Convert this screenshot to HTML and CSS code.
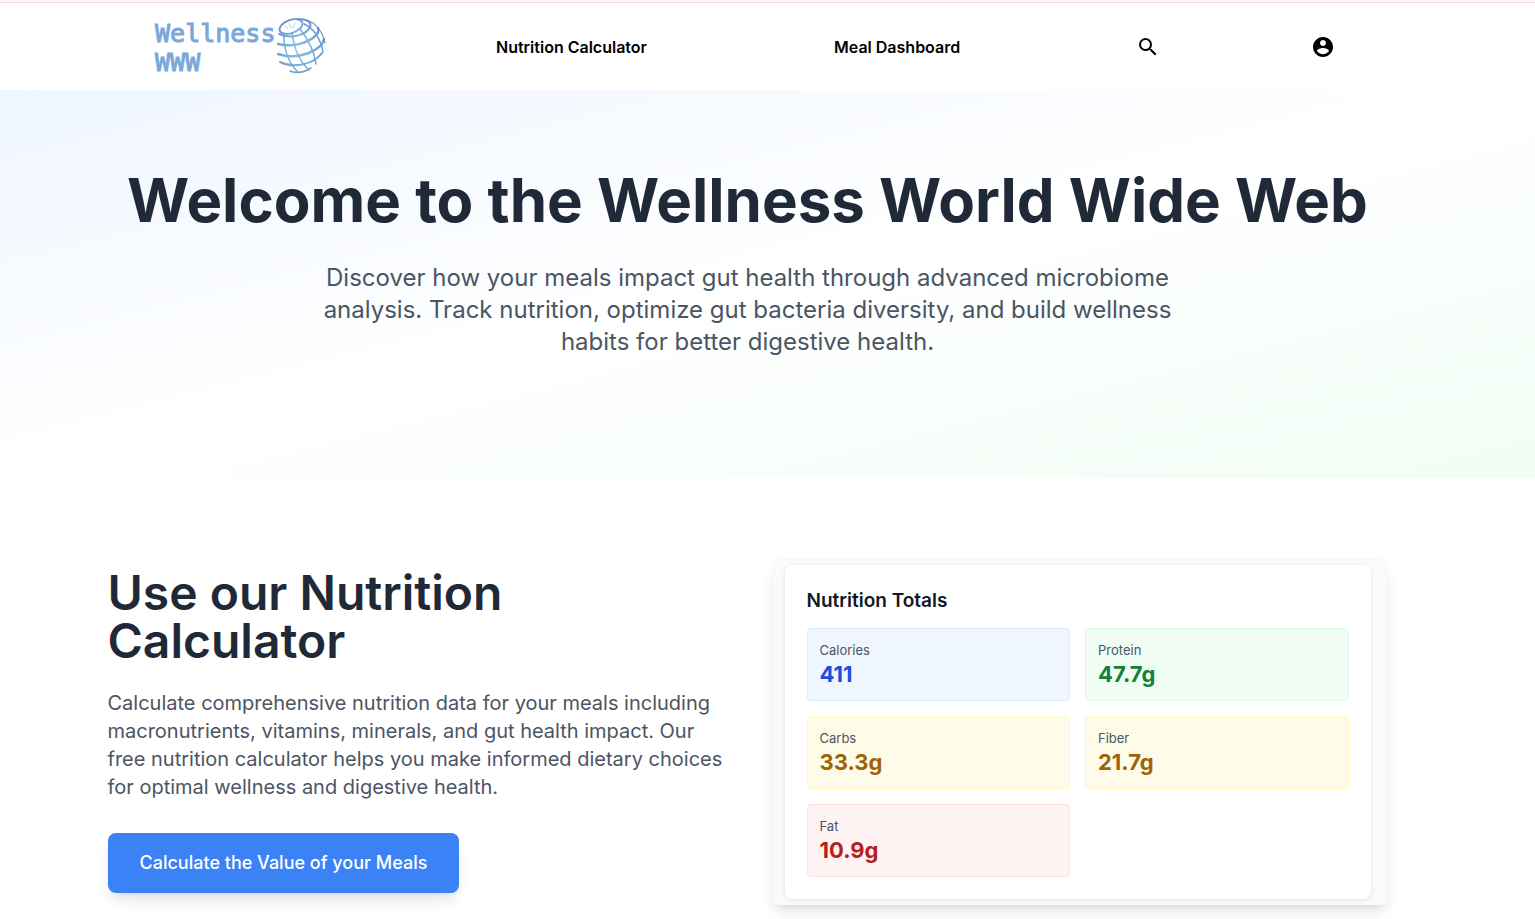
FILE: index.html
```html
<!DOCTYPE html>
<html lang="en">
<head>
<meta charset="utf-8">
<meta name="viewport" content="width=device-width, initial-scale=1">
<title>Wellness World Wide Web</title>
<link rel="stylesheet" href="styles.css">
</head>
<body>
<div class="top-strip"></div>
<header class="site-header">
  <a class="logo" href="#">
    <span class="logo-text">Wellness<br>WWW</span>
    <svg class="logo-globe" viewBox="0 0 50 56" fill="none" stroke-linecap="round" aria-hidden="true">
      <defs>
        <radialGradient id="globe" gradientUnits="userSpaceOnUse" cx="21" cy="31" r="30">
          <stop offset="0" stop-color="#8cc4ea"/>
          <stop offset="1" stop-color="#6a94cf"/>
        </radialGradient>
      </defs>
      <g stroke="url(#globe)">
        <ellipse cx="14" cy="8.500" rx="12" ry="6.500" transform="rotate(-20 14 8.500)" stroke-width="1.800"/>
        <path d="M20 1C30 1 35 4 33 9C30 16 15 22 2 16" stroke-width="2"/>
        <path d="M41 10C45 18 24 31 1 26" stroke-width="2.400"/>
        <path d="M47 21C46 32 21 43 1 36" stroke-width="2.400"/>
        <path d="M45 35C37 46 17 51 3 44" stroke-width="2"/>
        <path d="M7 15C6 29 11 45 21 54" stroke-width="1.500"/>
        <path d="M15 15C17 30 23 44 32 52" stroke-width="1.500"/>
        <path d="M23 11C31 21 37 33 39 46" stroke-width="1.500"/>
        <path d="M27 6C37 10 44 22 46 34" stroke-width="1.500"/>
        <path d="M30 2C39 5 46 14 48 25" stroke-width="1.200"/>
        <path d="M13 53Q23 57 34 50" stroke-width="1.500"/>
        <path d="M8 8l3 3M12 5l2 5M18 5l-2 5" stroke-width=".5"/>
      </g>
    </svg>
  </a>
  <a class="nav-link" href="#">Nutrition Calculator</a>
  <a class="nav-link" href="#">Meal Dashboard</a>
  <button class="icon-button" type="button" aria-label="Search">
    <svg viewBox="0 0 24 24" aria-hidden="true"><path d="M15.5 14h-.79l-.28-.27A6.471 6.471 0 0 0 16 9.500 6.500 6.500 0 1 0 9.500 16c1.610 0 3.090-.59 4.230-1.570l.27.28v.79l5 4.990L20.490 19l-4.990-5zm-6 0C7.010 14 5 11.990 5 9.500S7.010 5 9.500 5 14 7.010 14 9.500 11.990 14 9.500 14z"/></svg>
  </button>
  <button class="icon-button" type="button" aria-label="Account">
    <svg viewBox="0 0 24 24" aria-hidden="true"><path d="M12 2C6.480 2 2 6.480 2 12s4.480 10 10 10 10-4.480 10-10S17.520 2 12 2zm0 3c1.660 0 3 1.340 3 3s-1.340 3-3 3-3-1.340-3-3 1.340-3 3-3zm0 14.200c-2.500 0-4.710-1.280-6-3.220.03-1.990 4-3.080 6-3.080 1.990 0 5.970 1.090 6 3.080-1.290 1.940-3.500 3.220-6 3.220z"/></svg>
  </button>
</header>
<main>
  <section class="hero">
    <h1>Welcome to the Wellness World Wide Web</h1>
    <p>Discover how your meals impact gut health through advanced microbiome analysis. Track nutrition, optimize gut bacteria diversity, and build wellness habits for better digestive health.</p>
  </section>
  <section class="feature">
    <div class="feature-inner">
      <div class="feature-copy">
        <h2>Use our Nutrition Calculator</h2>
        <p>Calculate comprehensive nutrition data for your meals including macronutrients, vitamins, minerals, and gut health impact. Our free nutrition calculator helps you make informed dietary choices for optimal wellness and digestive health.</p>
        <a class="cta" href="#">Calculate the Value of your Meals</a>
      </div>
      <div class="preview">
        <div class="totals">
          <h3>Nutrition Totals</h3>
          <dl class="tiles">
            <div class="tile blue"><dt>Calories</dt><dd>411</dd></div>
            <div class="tile green"><dt>Protein</dt><dd>47.7g</dd></div>
            <div class="tile yellow"><dt>Carbs</dt><dd>33.3g</dd></div>
            <div class="tile yellow"><dt>Fiber</dt><dd>21.7g</dd></div>
            <div class="tile red"><dt>Fat</dt><dd>10.9g</dd></div>
          </dl>
        </div>
      </div>
    </div>
  </section>
</main>
</body>
</html>
```
FILE: styles.css
```css
* {
  box-sizing: border-box;
}

body {
  min-height: 100vh;
  margin: 0;
  background: #fff;
  color: #1f2937;
  font-family: Inter, "Liberation Sans", sans-serif;
}

h1, h2, h3, p, dl, dd {
  margin: 0;
}

.top-strip {
  height: 3px;
  background: #fef5f5;
  border-bottom: 1px solid #f3d9d9;
}

.site-header {
  display: grid;
  grid-template-columns: 341fr 338fr 302fr 175fr 224fr;
  align-items: center;
  justify-items: start;
  height: 87px;
  padding-left: 10.1%;
}

.logo {
  display: flex;
  align-items: center;
  gap: 2px;
  margin-bottom: 2px;
  color: #7aa8da;
  text-decoration: none;
}

.logo-text {
  padding-top: 4px;
  font: 25px/29px "DejaVu Sans Mono", monospace;
  -webkit-text-stroke: 1px #7aa8da;
}

.logo-globe {
  width: 50px;
  height: 56px;
}

.nav-link {
  color: #000;
  font-size: 16px;
  font-weight: 600;
  line-height: 24px;
  text-decoration: none;
}

.icon-button {
  display: flex;
  padding: 0;
  border: 0;
  background: none;
  cursor: pointer;
}

.icon-button svg {
  width: 24px;
  height: 24px;
  fill: #000;
}

.hero {
  padding: 80px 56px 120px 16px;
  background: linear-gradient(to bottom right, #eff6ff, #fff, #f0fdf4);
  text-align: center;
}

.hero h1 {
  margin-bottom: 32px;
  font-size: 60px;
  font-weight: 700;
  line-height: 60px;
}

.hero p {
  max-width: 896px;
  margin: 0 auto;
  color: #4b5563;
  font-size: 24px;
  line-height: 32px;
}

.feature {
  padding: 80px 56px 14px 16px;
}

.feature-inner {
  display: grid;
  grid-template-columns: 1fr 1fr;
  gap: 48px;
  align-items: center;
  max-width: 1280px;
  margin: 0 auto;
}

.feature h2 {
  margin-bottom: 24px;
  font-size: 48px;
  font-weight: 600;
  line-height: 48px;
}

.feature-copy {
  padding-bottom: 1px;
}

.feature-copy p {
  margin-bottom: 32px;
  color: #4b5563;
  font-size: 20px;
  line-height: 28px;
}

.cta {
  display: inline-block;
  padding: 16px 32px;
  border-radius: 8px;
  background: #3b82f6;
  box-shadow: 0 10px 15px -3px rgba(0, 0, 0, .1), 0 4px 6px -4px rgba(0, 0, 0, .1);
  color: #fff;
  font-size: 18px;
  font-weight: 500;
  line-height: 28px;
  text-decoration: none;
  vertical-align: top;
}

.preview {
  padding: 7px 17px 6px 13px;
  border-radius: 8px;
  background: #f9fafb;
  box-shadow: 0 10px 15px -3px rgba(0, 0, 0, .1), 0 4px 6px -4px rgba(0, 0, 0, .1);
}

.totals {
  padding: 22px;
  border-radius: 8px;
  background: #fff;
  box-shadow: 0 1px 4px rgba(0, 0, 0, .1);
}

.totals h3 {
  margin-bottom: 13px;
  color: #111827;
  font-size: 19px;
  font-weight: 600;
  line-height: 28px;
}

.tiles {
  display: grid;
  grid-template-columns: 1fr 1fr;
  gap: 15px;
}

.tile {
  padding: 12px;
  border: 1px solid;
  border-radius: 4px;
}

.tile dt {
  color: #4b5563;
  font-size: 13px;
  line-height: 19px;
}

.tile dd {
  font-size: 22px;
  font-weight: 700;
  line-height: 28px;
}

.blue {
  border-color: #dbeafe;
  background: #eff6ff;
}

.blue dd {
  color: #1d4ed8;
}

.green {
  border-color: #dcfce7;
  background: #f0fdf4;
}

.green dd {
  color: #15803d;
}

.yellow {
  border-color: #fef9c3;
  background: #fefce8;
}

.yellow dd {
  color: #a16207;
}

.red {
  border-color: #fee2e2;
  background: #fef2f2;
}

.red dd {
  color: #b91c1c;
}
```
